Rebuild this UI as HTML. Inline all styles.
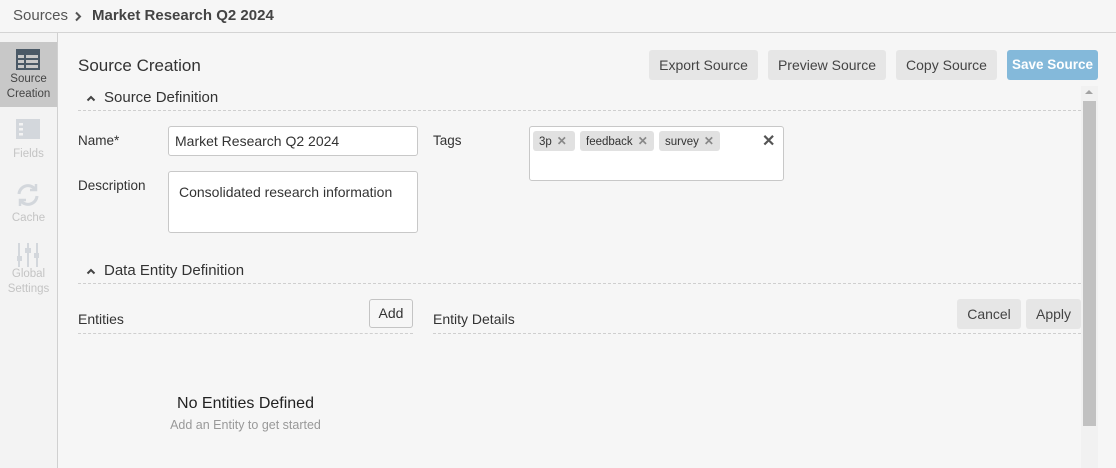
<!DOCTYPE html>
<html><head><meta charset="utf-8"><style>
*{box-sizing:border-box;margin:0;padding:0}
body{width:1116px;height:468px;overflow:hidden;background:#f6f6f6;font-family:"Liberation Sans",sans-serif;color:#333;position:relative}
.a{position:absolute}
.top{left:0;top:0;width:1116px;height:33px;background:#f6f6f6;border-bottom:1px solid #d4d4d4}
.side{left:0;top:33px;width:58px;height:435px;background:#f3f3f3;border-right:1px solid #d0d0d0}
.nav{position:absolute;left:0;width:57px;text-align:center;font-size:11.5px;line-height:15px;color:#c4c4c4}
.btn{position:absolute;height:30px;background:#e6e6e6;border-radius:3px;font-size:14px;color:#444;text-align:center;line-height:30px}
.lbl{position:absolute;font-size:13.5px;color:#333}
.dash{position:absolute;height:0;border-top:1px dashed #cfcfcf}
.inp{position:absolute;background:#fff;border:1px solid #c8c8c8;border-radius:3px;font-size:14px;color:#333}
.tag{position:absolute;top:131px;height:20px;background:#e1e1e1;border-radius:3px;font-size:11.5px;line-height:20px;padding-left:6px;color:#333}
.tag b{color:#888;font-weight:bold;margin-left:5px;font-size:12px}
.sec{position:absolute;font-size:15px;color:#333}
</style></head><body>
<div class="a top"></div>
<div class="a" style="left:13px;top:7px;font-size:15px;color:#555">Sources</div>
<svg class="a" style="left:74px;top:11px" width="8" height="11"><path d="M2 1.5l4 4-4 4" fill="none" stroke="#555" stroke-width="2"/></svg>
<div class="a" style="left:92px;top:7px;font-size:15px;color:#444;font-weight:bold">Market Research Q2 2024</div>

<div class="a side"></div>
<div class="a" style="left:0;top:42px;width:57px;height:65px;background:#c8c8c8"></div>
<svg class="a" style="left:16px;top:49px" width="24" height="21" viewBox="0 0 24 21"><rect x="0" y="0" width="24" height="21" fill="#4a5966"/><g fill="#c8c8c8"><rect x="2" y="6" width="6" height="3"/><rect x="10" y="6" width="12" height="3"/><rect x="2" y="11" width="6" height="3"/><rect x="10" y="11" width="12" height="3"/><rect x="2" y="16" width="6" height="3"/><rect x="10" y="16" width="12" height="3"/></g></svg>
<div class="nav" style="top:72px;color:#444">Source<br>Creation</div>
<svg class="a" style="left:16px;top:119px" width="24" height="20"><rect width="24" height="20" fill="#d3d7dc"/><rect x="3" y="4" width="4" height="2.5" fill="#f3f3f3"/><rect x="3" y="9" width="4" height="2.5" fill="#f3f3f3"/><rect x="3" y="14" width="4" height="2.5" fill="#f3f3f3"/></svg>
<div class="nav" style="top:147px">Fields</div>
<svg class="a" style="left:15px;top:182px" width="26" height="26" viewBox="0 0 26 26" fill="none" stroke="#d3d7dc" stroke-width="3"><path d="M4 12a9 9 0 0 1 16-5"/><path d="M22 14a9 9 0 0 1-16 5"/><path d="M21 2v6h-6" stroke-width="2.5"/><path d="M5 24v-6h6" stroke-width="2.5"/></svg>
<div class="nav" style="top:211px">Cache</div>
<svg class="a" style="left:17px;top:243px" width="22" height="24" fill="#d3d7dc"><rect x="1" y="0" width="2" height="24"/><rect x="10" y="0" width="2" height="24"/><rect x="19" y="0" width="2" height="24"/><rect x="-1" y="13" width="6" height="5"/><rect x="8" y="5" width="6" height="5"/><rect x="17" y="10" width="6" height="5"/></svg>
<div class="nav" style="top:267px">Global<br>Settings</div>

<div class="a" style="left:78px;top:56px;font-size:17px;color:#333">Source Creation</div>
<div class="btn" style="left:649px;top:50px;width:109px">Export Source</div>
<div class="btn" style="left:768px;top:50px;width:118px">Preview Source</div>
<div class="btn" style="left:896px;top:50px;width:101px">Copy Source</div>
<div class="btn" style="left:1007px;top:50px;width:91px;background:#84b9da;color:#fff;font-weight:bold;font-size:13.5px">Save Source</div>

<div class="a" style="left:1081px;top:86px;width:17px;height:382px;background:#f1f1f1"></div>
<div class="a" style="left:1083px;top:101px;width:13px;height:325px;background:#c1c1c1"></div>
<div class="a" style="left:1085px;top:90px;width:0;height:0;border-left:4px solid transparent;border-right:4px solid transparent;border-bottom:4px solid #a3a3a3"></div>

<svg class="a" style="left:86px;top:95px" width="10" height="7"><path d="M1.5 5.5l3.5-3.5 3.5 3.5" fill="none" stroke="#444" stroke-width="2"/></svg>
<div class="sec" style="left:104px;top:89px">Source Definition</div>
<div class="dash" style="left:78px;top:110px;width:1003px"></div>
<div class="lbl" style="left:78px;top:133px">Name*</div>
<div class="inp" style="left:168px;top:126px;width:250px;height:30px;line-height:28px;padding-left:6px">Market Research Q2 2024</div>
<div class="lbl" style="left:78px;top:178px">Description</div>
<div class="inp" style="left:168px;top:171px;width:250px;height:62px;padding:12px 0 0 10px">Consolidated research information</div>
<div class="lbl" style="left:433px;top:133px">Tags</div>
<div class="inp" style="left:529px;top:126px;width:255px;height:55px"></div>
<div class="tag" style="left:533px;width:42px">3p<b>✕</b></div>
<div class="tag" style="left:580px;width:74px">feedback<b>✕</b></div>
<div class="tag" style="left:659px;width:61px">survey<b>✕</b></div>
<div class="a" style="left:762px;top:131px;font-size:16px;color:#555;font-weight:bold">✕</div>

<svg class="a" style="left:86px;top:268px" width="10" height="7"><path d="M1.5 5.5l3.5-3.5 3.5 3.5" fill="none" stroke="#444" stroke-width="2"/></svg>
<div class="sec" style="left:104px;top:262px">Data Entity Definition</div>
<div class="dash" style="left:78px;top:283px;width:1003px"></div>
<div class="lbl" style="left:78px;top:311px;font-size:14px">Entities</div>
<div class="a" style="left:369px;top:299px;width:44px;height:29px;border:1px solid #c4c4c4;border-radius:3px;background:#f6f6f6;font-size:14px;text-align:center;line-height:27px">Add</div>
<div class="dash" style="left:78px;top:333px;width:335px"></div>
<div class="lbl" style="left:433px;top:311px;font-size:14px">Entity Details</div>
<div class="btn" style="left:957px;top:299px;width:64px">Cancel</div>
<div class="btn" style="left:1026px;top:299px;width:55px">Apply</div>
<div class="dash" style="left:433px;top:333px;width:648px"></div>
<div class="a" style="left:78px;top:395px;width:335px;text-align:center;font-size:16px;color:#222">No Entities Defined</div>
<div class="a" style="left:78px;top:418px;width:335px;text-align:center;font-size:12.5px;color:#999">Add an Entity to get started</div>
</body></html>
